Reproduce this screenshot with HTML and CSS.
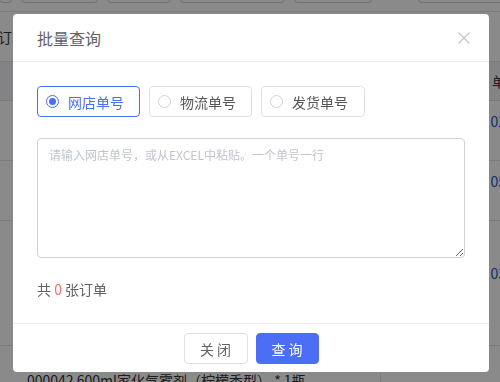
FILE: index.html
```html
<!DOCTYPE html>
<html lang="zh-CN">
<head>
<meta charset="utf-8">
<title>批量查询</title>
<link rel="stylesheet" href="styles.css">
</head>
<body>
<div class="page">
  <div class="toolbar">
    <span class="tb-btn w12"></span>
    <span class="tb-btn w77"></span>
    <span class="tb-btn w64"></span>
    <span class="tb-btn w105"></span>
    <span class="tb-btn w78"></span>
    <span class="tb-spacer"></span>
    <span class="tb-btn w82"></span>
  </div>
  <div class="tabs"><span class="tab">订单</span></div>
  <div class="thead"><span class="th-right">单</span></div>
  <div class="trow r60"><span class="link">02</span></div>
  <div class="trow r60"><span class="link">05</span></div>
  <div class="trow r125"><span class="link">03</span></div>
  <div class="trow last"><span class="goods">000042 600ml家化气雾剂（柠檬香型） * 1瓶</span><span class="col-line"></span></div>
</div>

<div class="mask"></div>

<div class="dialog">
  <div class="dlg-header">
    <span class="dlg-title">批量查询</span>
    <svg class="dlg-close" width="12" height="12" viewBox="0 0 12 12"><path d="M0.5 0.5 L11.5 11.5 M11.5 0.5 L0.5 11.5" stroke="#c0c4cc" stroke-width="1.2" fill="none"/></svg>
  </div>
  <div class="dlg-body">
    <div class="radio-group">
      <label class="radio checked"><span class="radio-dot"></span><span class="radio-label">网店单号</span></label>
      <label class="radio"><span class="radio-dot"></span><span class="radio-label">物流单号</span></label>
      <label class="radio wide"><span class="radio-dot"></span><span class="radio-label">发货单号</span></label>
    </div>
    <textarea class="order-input" placeholder="请输入网店单号，或从EXCEL中粘贴。一个单号一行"></textarea>
    <div class="count">共 <span class="num">0</span> 张订单</div>
  </div>
  <div class="dlg-footer">
    <button class="btn">关 闭</button>
    <button class="btn primary">查 询</button>
  </div>
</div>
</body>
</html>
```
FILE: styles.css
```css
* { box-sizing: border-box; }
html, body { margin: 0; padding: 0; }
body {
  width: 500px;
  height: 382px;
  overflow: hidden;
  background: #fff;
  font-family: "Noto Sans CJK SC", "Noto Sans", sans-serif;
  color: #333;
}

/* underlying page */
.page { width: 500px; }
.toolbar {
  display: flex;
  gap: 9px;
  height: 17px;
  margin-top: -14px;
}
.tb-btn {
  display: block;
  height: 17px;
  border: 1px solid #cfcfcf;
  border-radius: 4px;
  background: #fff;
}
.tb-btn.w12 { width: 13px; margin-left: -1px; }
.tb-btn.w77 { width: 77px; }
.tb-btn.w64 { width: 64px; }
.tb-btn.w105 { width: 105px; }
.tb-btn.w78 { width: 78px; }
.tb-spacer { flex: 1; }
.tb-btn.w82 { width: 86px; margin-right: -4px; }
.tabs {
  height: 51px;
  padding-top: 15px;
  border-top: 1px solid #e8e8e8;
  margin-top: 8px;
  border-bottom: 1px solid #e4e4e4;
  font-size: 14px;
  line-height: 20px;
}
.tab { margin-left: -2px; color: #333; }
.thead {
  height: 39px;
  background: #f2f3f5;
  border-bottom: 1px solid #e0e0e0;
  display: flex;
  justify-content: flex-end;
  align-items: center;
  font-size: 14px;
  color: #333;
}
.th-right { margin-right: -6px; }
.trow {
  border-bottom: 1px solid #e6e6e6;
  display: flex;
  justify-content: flex-end;
  font-size: 14px;
}
.trow.r60 { height: 60px; padding-top: 10px; }
.trow.r125 { height: 125px; padding-top: 42px; }
.link { color: #2d4fd6; margin-right: -6px; line-height: 20px; }
.trow.last {
  height: 40px;
  justify-content: flex-start;
  padding-top: 24px;
  position: relative;
}
.goods { margin-left: 27px; color: #333; line-height: 20px; white-space: nowrap; }
.col-line {
  position: absolute;
  left: 380px;
  top: 0;
  bottom: 0;
  border-left: 1px solid #e6e6e6;
}

.mask {
  position: fixed;
  inset: 0;
  background: rgba(0, 0, 0, 0.46);
}

/* dialog */
.dialog {
  position: absolute;
  left: 13px;
  top: 14px;
  width: 476px;
  height: 358px;
  background: #fff;
  border-radius: 4px;
  display: flex;
  flex-direction: column;
}
.dlg-header {
  height: 48px;
  border-bottom: 1px solid #ebeef5;
  display: flex;
  align-items: center;
  justify-content: space-between;
  padding: 0 19px 0 24px;
}
.dlg-title {
  font-size: 16px;
  color: #5f6268;
  line-height: 22px;
}
.dlg-close { display: block; margin-top: 1px; }

.dlg-body {
  flex: 1;
  padding: 24px 24px 0 24px;
  display: flex;
  flex-direction: column;
  border-bottom: 1px solid #ebeef5;
}
.radio-group { display: flex; gap: 9px; }
.radio {
  width: 103px;
  height: 31px;
  border: 1px solid #dcdfe6;
  border-radius: 4px;
  display: flex;
  align-items: center;
  padding-left: 8px;
  font-size: 14px;
  color: #555;
}
.radio.wide { width: 104px; }
.radio-dot {
  width: 13px;
  height: 13px;
  border: 1px solid #cdd1d8;
  border-radius: 50%;
  margin-right: 9px;
  position: relative;
  flex: none;
}
.radio.checked { border-color: #4b6ef5; color: #4b6ef5; }
.radio.checked .radio-dot { border-color: #4b6ef5; }
.radio.checked .radio-dot::after {
  content: "";
  position: absolute;
  left: 2px; top: 2px;
  width: 7px; height: 7px;
  border-radius: 50%;
  background: #4b6ef5;
}
.radio-label { line-height: 20px; }

.order-input {
  margin-top: 21px;
  width: 428px;
  height: 120px;
  border: 1px solid #ccd1da;
  border-radius: 4px;
  padding: 6px 11px;
  font-family: "Noto Sans CJK SC", "Noto Sans", sans-serif;
  font-size: 12px;
  line-height: 20px;
  color: #333;
  outline: none;
}
.order-input::placeholder { color: #c0c4cc; }

.count {
  margin-top: 21px;
  font-size: 14px;
  line-height: 20px;
  color: #606266;
}
.num { color: #f56c6c; }

.dlg-footer {
  height: 48px;
  display: flex;
  justify-content: center;
  gap: 8px;
  padding-top: 9px;
}
.btn {
  width: 64px;
  height: 31px;
  border: 1px solid #dcdfe6;
  border-radius: 4px;
  background: #fff;
  color: #606266;
  font-family: "Noto Sans CJK SC", "Noto Sans", sans-serif;
  font-size: 14px;
  padding: 0;
}
.btn.primary {
  width: 63px;
  background: #4b6ef5;
  border-color: #4b6ef5;
  color: #fff;
}
```
